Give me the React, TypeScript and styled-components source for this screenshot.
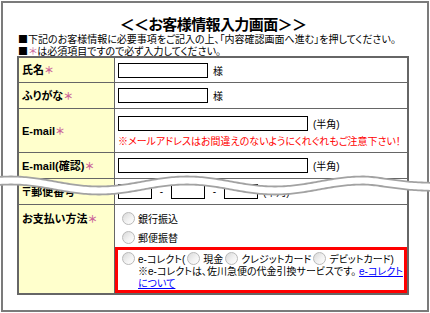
import React from "react";
import styled, { createGlobalStyle } from "styled-components";

const GlobalStyle = createGlobalStyle`
  html, body { margin: 0; padding: 0; background: #fff; }
  body {
    font-family: "Liberation Sans", "Noto Sans CJK JP", sans-serif;
    font-size: 10px;
    color: #000;
    font-feature-settings: "palt";
  }
`;

const Page = styled.div`
  position: relative;
  width: 430px;
  height: 313px;
  overflow: hidden;
`;

const Frame = styled.div`
  box-sizing: border-box;
  margin: 1px 0 0 1px;
  width: 428px;
  height: 311px;
  border: 2px solid #7b7b7b;
  padding: 12px 0 0 14px;
`;

const Content = styled.div`
  width: 392px;
`;

const Title = styled.h1`
  margin: 0;
  font-family: "Noto Sans CJK JP", sans-serif;
  font-size: 15px;
  line-height: 17px;
  font-weight: bold;
  letter-spacing: -0.6px;
  text-align: center;
  white-space: nowrap;
`;

const NoticeList = styled.div`
  margin-top: 1px;
  padding-left: 1px;
`;

const Notice = styled.p`
  margin: 0;
  font-family: "Noto Sans CJK JP", sans-serif;
  font-size: 10px;
  line-height: 11.5px;
  white-space: nowrap;
`;

const Req = styled.span`
  color: #cc6699;
  font-family: "Noto Sans CJK JP", sans-serif;
  font-size: 10px;
  margin-left: 1px;
`;

const FormTable = styled.div`
  box-sizing: border-box;
  width: 392px;
  border: 2px solid #666;
`;

const Row = styled.div<{ $h: number; $last?: boolean }>`
  display: grid;
  grid-template-columns: 96px 1fr;
  height: ${(p) => p.$h}px;
  border-bottom: ${(p) => (p.$last ? "none" : "1px solid #666")};
`;

const Label = styled.div<{ $top?: boolean }>`
  background: #ffffcc;
  border-right: 1px solid #666;
  padding: ${(p) => (p.$top ? "7px 0 0 3px" : "0 0 0 3px")};
  display: flex;
  align-items: ${(p) => (p.$top ? "flex-start" : "center")};
  font-size: 11px;
  line-height: 14px;
  font-weight: bold;
  white-space: nowrap;
`;

const Value = styled.div`
  padding-left: 3px;
  display: flex;
  align-items: center;
  white-space: nowrap;
`;

const StackValue = styled.div`
  padding: 7px 0 0 3px;
  display: flex;
  flex-direction: column;
  align-items: flex-start;
  white-space: nowrap;
`;

const PayValue = styled.div`
  padding-top: 4px;
  display: flex;
  flex-direction: column;
  white-space: nowrap;
`;

const InputLine = styled.div`
  display: flex;
  align-items: center;
`;

const TextInput = styled.input<{ $w: number }>`
  box-sizing: border-box;
  width: ${(p) => p.$w}px;
  height: 15px;
  border: 1px solid #000;
  padding: 0;
  margin: 0;
  background: #fff;
  flex: none;
`;

const Suffix = styled.span`
  margin-left: 5px;
  font-size: 10px;
`;

const Dash = styled.span`
  width: 19px;
  text-align: center;
  font-size: 10px;
`;

const Warn = styled.div`
  margin-top: 5px;
  color: #ff0000;
  font-size: 10px;
  line-height: 12px;
`;

const RadioLine = styled.div`
  display: flex;
  align-items: center;
  height: 19px;
  padding-left: 7px;
`;

const Radio = styled.input.attrs({ type: "radio" })`
  appearance: none;
  -webkit-appearance: none;
  box-sizing: border-box;
  width: 13px;
  height: 13px;
  margin: 0 3px 0 0;
  border: 1px solid #b9b9b9;
  border-radius: 50%;
  background: linear-gradient(135deg, #d8d8d8 0%, #f2f2f2 55%, #ffffff 100%);
  flex: none;
`;

const Option = styled.label`
  display: inline-flex;
  align-items: center;
  margin-right: 2px;
  font-size: 10px;
`;

const RedBox = styled.div`
  box-sizing: border-box;
  height: 46px;
  border: 3px solid #ff0000;
  padding: 1px 0 0 4px;
`;

const BoxLine = styled.div`
  display: flex;
  align-items: center;
  height: 15px;
`;

const BoxNote = styled.div`
  padding-left: 16px;
  font-size: 10px;
  line-height: 12px;
`;

const Link = styled.a`
  color: #0000ff;
  text-decoration: underline;
`;

const WaveSvg = styled.svg`
  position: absolute;
  left: 0;
  top: 166px;
  width: 430px;
  height: 40px;
  pointer-events: none;
`;

function Wave() {
  const top: [number, number][] = [];
  for (let x = 0; x <= 430; x += 2) {
    const damp = x > 367 ? Math.max(0.35, 1 - (x - 367) / 90) : 1;
    top.push([x, 15.5 - 5 * damp * Math.cos((2 * Math.PI * (x - 187)) / 176)]);
  }
  const bottom = top.map(([x, y]) => [x, y + 8] as [number, number]);
  const line = (pts: [number, number][]) =>
    pts.map(([x, y], i) => `${i ? "L" : "M"}${x} ${y.toFixed(2)}`).join(" ");
  const fill =
    line(top) +
    " " +
    [...bottom].reverse().map(([x, y]) => `L${x} ${y.toFixed(2)}`).join(" ") +
    " Z";
  return (
    <WaveSvg viewBox="0 0 430 40">
      <path d={fill} fill="#ffffff" />
      <path d={line(top)} fill="none" stroke="#a2a2a2" strokeWidth="1.8" />
      <path d={line(bottom)} fill="none" stroke="#a2a2a2" strokeWidth="1.8" />
    </WaveSvg>
  );
}

export default function App() {
  return (
    <Page>
      <GlobalStyle />
      <Frame>
        <Content>
          <Title>＜＜お客様情報入力画面＞＞</Title>
          <NoticeList>
            <Notice>■下記のお客様情報に必要事項をご記入の上、「内容確認画面へ進む」を押してください。</Notice>
            <Notice>
              ■<Req>＊</Req>は必須項目ですので必ず入力してください。
            </Notice>
          </NoticeList>
          <FormTable>
            <Row $h={24}>
              <Label>
                氏名<Req>＊</Req>
              </Label>
              <Value>
                <TextInput $w={90} />
                <Suffix>様</Suffix>
              </Value>
            </Row>
            <Row $h={25}>
              <Label>
                ふりがな<Req>＊</Req>
              </Label>
              <Value>
                <TextInput $w={90} />
                <Suffix>様</Suffix>
              </Value>
            </Row>
            <Row $h={43}>
              <Label>
                E-mail<Req>＊</Req>
              </Label>
              <StackValue>
                <InputLine>
                  <TextInput $w={190} />
                  <Suffix>(半角)</Suffix>
                </InputLine>
                <Warn>※メールアドレスはお間違えのないようにくれぐれもご注意下さい！</Warn>
              </StackValue>
            </Row>
            <Row $h={25}>
              <Label>
                E-mail(確認)<Req>＊</Req>
              </Label>
              <Value>
                <TextInput $w={190} />
                <Suffix>(半角)</Suffix>
              </Value>
            </Row>
            <Row $h={25}>
              <Label>〒郵便番号</Label>
              <Value>
                <TextInput $w={34} />
                <Dash>-</Dash>
                <TextInput $w={34} />
                <Dash>-</Dash>
                <TextInput $w={34} />
                <Suffix>(半角)</Suffix>
              </Value>
            </Row>
            <Row $h={88} $last>
              <Label $top>
                お支払い方法<Req>＊</Req>
              </Label>
              <PayValue>
                <RadioLine>
                  <Option>
                    <Radio name="pay" />
                    銀行振込
                  </Option>
                </RadioLine>
                <RadioLine>
                  <Option>
                    <Radio name="pay" />
                    郵便振替
                  </Option>
                </RadioLine>
                <RedBox>
                  <BoxLine>
                    <Option>
                      <Radio name="pay" />
                      e-コレクト(
                    </Option>
                    <Option>
                      <Radio name="ec" />
                      現金
                    </Option>
                    <Option>
                      <Radio name="ec" />
                      クレジットカード
                    </Option>
                    <Option>
                      <Radio name="ec" />
                      デビットカード)
                    </Option>
                  </BoxLine>
                  <BoxNote>
                    ※e-コレクトは、佐川急便の代金引換サービスです。{" "}
                    <Link href="#">
                      e-コレクト
                      <br />
                      について
                    </Link>
                  </BoxNote>
                </RedBox>
              </PayValue>
            </Row>
          </FormTable>
        </Content>
      </Frame>
      <Wave />
    </Page>
  );
}
